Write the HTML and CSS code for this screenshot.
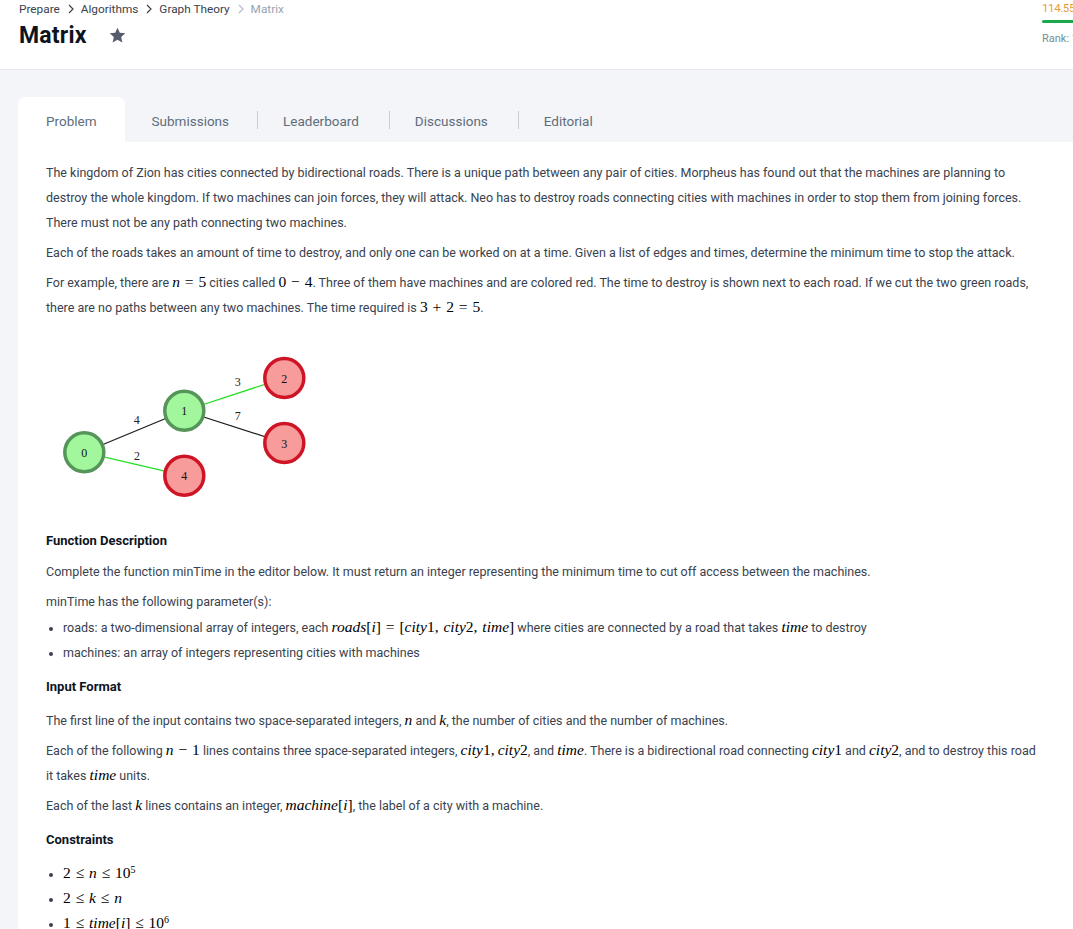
FILE: index.html
```html
<!DOCTYPE html>
<html lang="en">
<head>
<meta charset="utf-8">
<title>Matrix | HackerRank</title>
<link rel="stylesheet" href="styles.css">
</head>
<body>
<header class="page-head">
  <div class="head-left">
    <nav class="crumbs">
      <a class="crumb">Prepare</a>
      <svg class="chev" viewBox="0 0 6 10" width="6" height="10"><path d="M1 1l4 4-4 4" fill="none" stroke="currentColor" stroke-width="1.2"/></svg>
      <a class="crumb">Algorithms</a>
      <svg class="chev" viewBox="0 0 6 10" width="6" height="10"><path d="M1 1l4 4-4 4" fill="none" stroke="currentColor" stroke-width="1.2"/></svg>
      <a class="crumb">Graph Theory</a>
      <svg class="chev chev-light" viewBox="0 0 6 10" width="6" height="10"><path d="M1 1l4 4-4 4" fill="none" stroke="currentColor" stroke-width="1.2"/></svg>
      <span class="crumb crumb-current">Matrix</span>
    </nav>
    <div class="title-row">
      <h1 class="title">Matrix</h1>
      <svg class="star" viewBox="0 0 24 24" width="19" height="19"><path d="M12 2.2l2.9 6.4 7 .7-5.3 4.7 1.6 6.9L12 17.3l-6.2 3.6 1.6-6.9L2.1 9.3l7-.7z" fill="currentColor"/></svg>
    </div>
  </div>
  <div class="score">
    <div class="score-val">114.55 points</div>
    <div class="score-bar"></div>
    <div class="rank">Rank: 12345</div>
  </div>
</header>

<main class="main">
  <div class="tabs">
    <div class="tab tab-active">Problem</div>
    <div class="tab">Submissions</div>
    <div class="tab tab-sep">Leaderboard</div>
    <div class="tab tab-sep">Discussions</div>
    <div class="tab tab-sep">Editorial</div>
  </div>

  <section class="card">
    <p>The kingdom of Zion has cities connected by bidirectional roads. There is a unique path between any pair of cities. Morpheus has found out that the machines are planning to destroy the whole kingdom. If two machines can join forces, they will attack. Neo has to destroy roads connecting cities with machines in order to stop them from joining forces. There must not be any path connecting two machines.</p>
    <p>Each of the roads takes an amount of time to destroy, and only one can be worked on at a time. Given a list of edges and times, determine the minimum time to stop the attack.</p>
    <p>For example, there are <span class="m"><i>n</i> = 5</span> cities called <span class="m">0 − 4</span>. Three of them have machines and are colored red. The time to destroy is shown next to each road. If we cut the two green roads, there are no paths between any two machines. The time required is <span class="m">3 + 2 = 5</span>.</p>

    <svg class="graph" viewBox="0 0 280 195" width="280" height="195">
      <line x1="38.3" y1="127.3" x2="138.3" y2="85.7" stroke="#1a1a1a" stroke-width="1.2"/>
      <line x1="38.3" y1="127.3" x2="138.3" y2="150.7" stroke="#22e022" stroke-width="1.2"/>
      <line x1="138.3" y1="85.7" x2="238.3" y2="53" stroke="#22e022" stroke-width="1.2"/>
      <line x1="138.3" y1="85.7" x2="238.3" y2="118" stroke="#1a1a1a" stroke-width="1.2"/>
      <g class="elabel">
        <text x="90.7" y="95">4</text>
        <text x="91" y="130.7">2</text>
        <text x="191.7" y="57.3">3</text>
        <text x="191.7" y="90.7">7</text>
      </g>
      <g class="node ok">
        <circle cx="38.3" cy="127.3" r="19.5"/><text x="38.3" y="128">0</text>
      </g>
      <g class="node ok">
        <circle cx="138.3" cy="85.7" r="19.5"/><text x="138.3" y="86.4">1</text>
      </g>
      <g class="node bad">
        <circle cx="238.3" cy="53" r="19.5"/><text x="238.3" y="53.7">2</text>
      </g>
      <g class="node bad">
        <circle cx="238.3" cy="118" r="19.5"/><text x="238.3" y="118.7">3</text>
      </g>
      <g class="node bad">
        <circle cx="138.3" cy="150.7" r="19.5"/><text x="138.3" y="151.4">4</text>
      </g>
    </svg>

    <h3 class="sec sec-first">Function Description</h3>
    <p>Complete the function minTime in the editor below. It must return an integer representing the minimum time to cut off access between the machines.</p>
    <p class="lead">minTime has the following parameter(s):</p>
    <ul class="list">
      <li>roads: a two-dimensional array of integers, each <span class="m"><i>roads</i>[<i>i</i>] = [<i>city</i>1, <i>city</i>2, <i>time</i>]</span> where cities are connected by a road that takes <span class="m"><i>time</i></span> to destroy</li>
      <li>machines: an array of integers representing cities with machines</li>
    </ul>

    <h3 class="sec">Input Format</h3>
    <p>The first line of the input contains two space-separated integers, <span class="m"><i>n</i></span> and <span class="m"><i>k</i></span>, the number of cities and the number of machines.</p>
    <p>Each of the following <span class="m"><i>n</i> − 1</span> lines contains three space-separated integers, <span class="m"><i>city</i>1,</span> <span class="m"><i>city</i>2</span>, and <span class="m"><i>time</i></span>. There is a bidirectional road connecting <span class="m"><i>city</i>1</span> and <span class="m"><i>city</i>2</span>, and to destroy this road it takes <span class="m"><i>time</i></span> units.</p>
    <p>Each of the last <span class="m"><i>k</i></span> lines contains an integer, <span class="m"><i>machine</i>[<i>i</i>]</span>, the label of a city with a machine.</p>

    <h3 class="sec">Constraints</h3>
    <ul class="list">
      <li><span class="m">2 ≤ <i>n</i> ≤ 10<sup>5</sup></span></li>
      <li><span class="m">2 ≤ <i>k</i> ≤ <i>n</i></span></li>
      <li><span class="m">1 ≤ <i>time</i>[<i>i</i>] ≤ 10<sup>6</sup></span></li>
    </ul>
  </section>
</main>
</body>
</html>
```

FILE: styles.css
```css
html, body {
  margin: 0;
  padding: 0;
  overflow-x: hidden;
}
body {
  font-family: Roboto, "Liberation Sans", Arial, sans-serif;
  color: #39424e;
  background: #f3f5f9;
}

.page-head {
  background: #fff;
  height: 69px;
  border-bottom: 1px solid #e4e7ee;
  display: flex;
  justify-content: space-between;
  padding-left: 19px;
}
.head-left {
  display: flex;
  flex-direction: column;
}
.crumbs {
  display: flex;
  align-items: center;
  height: 18px;
  font-size: 11.8px;
  color: #39424e;
}
.crumb { color: #39424e; text-decoration: none; }
.crumb-current { color: #979faf; }
.chev { margin: 0 7px 0 8px; color: #39424e; }
.chev-light { color: #b7bcc6; }

.title-row {
  display: flex;
  align-items: center;
  height: 34px;
}
.title {
  margin: 0;
  font-size: 23px;
  font-weight: 700;
  color: #0e141e;
  letter-spacing: 0.2px;
}
.star {
  margin-left: 21px;
  color: #585b6b;
}

.score {
  width: 60px;
  margin-right: -29px;
  display: flex;
  flex-direction: column;
  white-space: nowrap;
}
.score-val {
  font-size: 11.5px;
  letter-spacing: -0.4px;
  color: #e59d3a;
  height: 18px;
  line-height: 17px;
}
.score-bar {
  height: 3px;
  background: #1ba94c;
  margin-top: 2px;
  border-radius: 2px 0 0 2px;
}
.rank {
  margin-top: 9px;
  font-size: 11px;
  color: #738f93;
}

.main {
  padding: 27px 0 0 18px;
}
.tabs {
  display: flex;
  align-items: stretch;
  height: 45px;
}
.tab {
  display: flex;
  align-items: center;
  padding: 2px 28px 0 27px;
  font-size: 13.5px;
  color: #5f6d7a;
  position: relative;
}
.tab-sep {
  padding-left: 26px;
  padding-right: 30px;
}
.tab-active {
  background: #fff;
  border-radius: 7px 7px 0 0;
  padding-left: 28px;
  padding-right: 28px;
}
.tab-sep::before {
  content: "";
  position: absolute;
  left: 0;
  top: 14px;
  height: 18px;
  border-left: 1px solid #c8ccd4;
}

.card {
  background: #fff;
  padding: 18px 28px 20px 28px;
  font-size: 12.5px;
}
.card p {
  margin: 0 0 5px;
  line-height: 25px;
}
.card p.lead {
  margin-bottom: 1px;
}
.m {
  font-family: "Liberation Serif", "DejaVu Serif", serif;
  font-size: 15.5px;
  line-height: 1;
  color: #000;
  white-space: nowrap;
  word-spacing: 1px;
}
.m i {
  font-style: italic;
}
.m sup {
  font-size: 10px;
  line-height: 0;
  vertical-align: 0.55em;
}

.graph {
  display: block;
  margin: 0;
}
.elabel text {
  font-family: "Liberation Serif", serif;
  font-size: 12px;
  fill: #222;
  text-anchor: middle;
  dominant-baseline: central;
}
.node text {
  font-family: "Liberation Serif", serif;
  font-size: 12px;
  fill: #111;
  text-anchor: middle;
  dominant-baseline: central;
}
.node circle { stroke-width: 3.5; }
.ok circle { fill: #a2f79d; stroke: #55955a; }
.bad circle { fill: #f89b9b; stroke: #cf1525; }

.sec {
  margin: 9px 0 9px;
  font-size: 13px;
  font-weight: 700;
  line-height: 25px;
  color: #0e141e;
}
.sec-first {
  margin-top: 8px;
  margin-bottom: 6px;
}
.list {
  margin: 0 0 8px;
  padding-left: 17px;
  line-height: 25px;
}
.list li::marker {
  font-size: 12px;
}
```
